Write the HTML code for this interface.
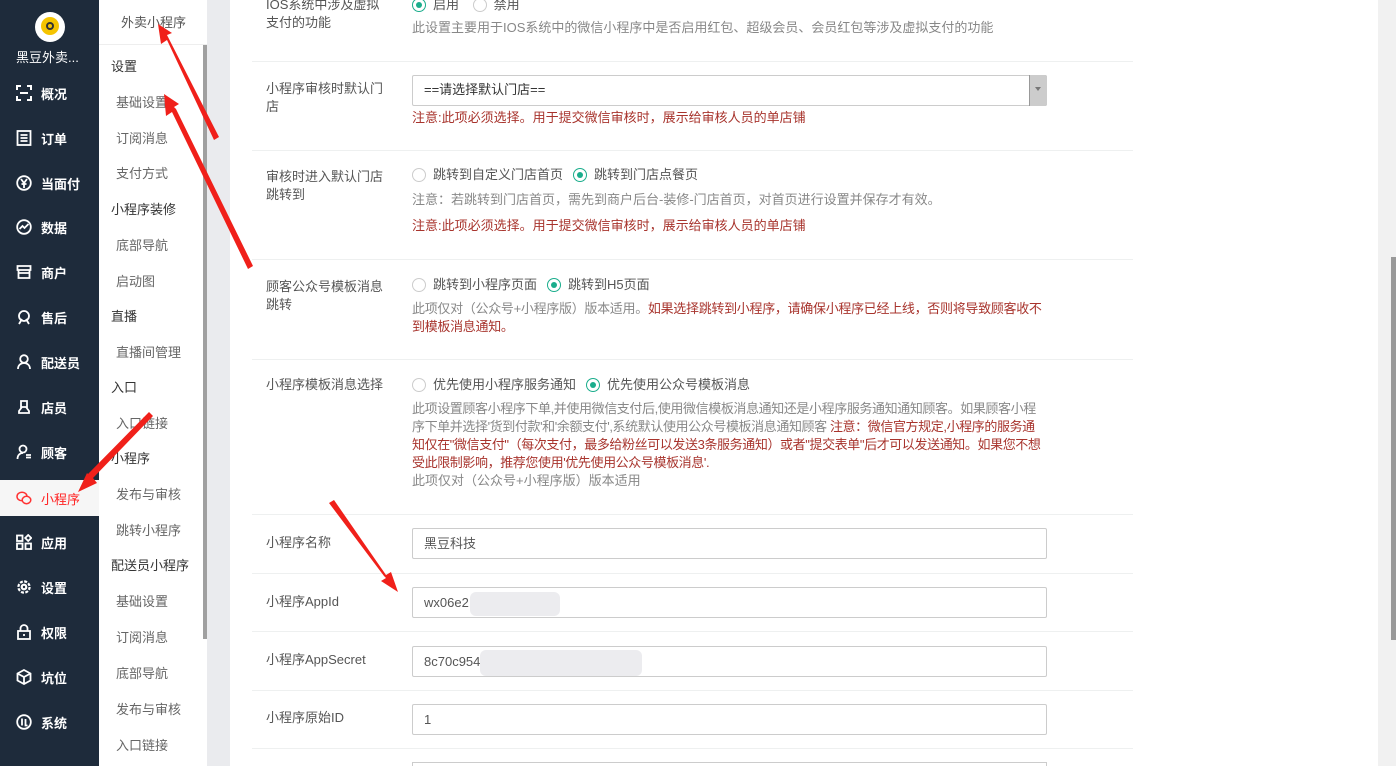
<!DOCTYPE html>
<html style="overflow:hidden;width:1396px;height:766px"><head><meta charset="utf-8"><style>
*{margin:0;padding:0;box-sizing:border-box}
body{width:1396px;height:766px;overflow:hidden;background:#eaebee;font-family:"Liberation Sans","Noto Sans CJK SC",sans-serif;font-size:13px;position:relative}
.a{position:absolute;white-space:nowrap}
#side{position:absolute;left:0;top:0;width:99px;height:766px;background:#1e2b3b;color:#fff}
.mi{position:absolute;left:0;width:99px;height:36px;font-size:13px;font-weight:bold}
.mi span{position:absolute;left:41px;top:9px}
.mi svg{position:absolute;left:16px;top:10px}
#sub{position:absolute;left:99px;top:0;width:108px;height:766px;background:#fff;overflow:hidden}
.si{position:absolute;font-size:13px;color:#666}
.sh{left:12px;color:#333}
.sc{left:17px}
#main{position:absolute;left:230px;top:0;width:1148px;height:766px;background:#fff;overflow:hidden}
.hr{position:absolute;left:22px;width:881px;height:1px;background:#eef0f0}
.lb{position:absolute;left:36px;color:#555;line-height:18px;width:120px;white-space:normal}
.tx{position:absolute;left:182px;color:#888;line-height:18px;white-space:nowrap}
.red{color:#a8342d}
.inp{position:absolute;left:182px;width:635px;height:31px;border:1px solid #ccc;border-radius:2px;color:#555;padding:8px 11px;line-height:14px}
.rd{display:inline-block;width:14px;height:14px;border:1px solid #ccc;border-radius:50%;vertical-align:-3px;margin-right:7px;position:relative;background:#fff}
.rd.on{border-color:#1aad8c}
.rd.on:after{content:"";position:absolute;left:3px;top:3px;width:6px;height:6px;border-radius:50%;background:#1aad8c}
.opt{color:#555;margin-right:10px}
</style></head><body>
<div id="side">
 <div class="a" style="left:35px;top:12px;width:30px;height:30px;border-radius:50%;background:#fff"></div>
 <div class="a" style="left:41px;top:17px;width:18px;height:18px;border-radius:50%;background:#f5c400"></div>
 <div class="a" style="left:46px;top:22px;width:8px;height:8px;border:2px solid #333;border-radius:50%"></div>
 <div class="a" style="left:16px;top:47px;font-size:13px;color:#fff">黑豆外卖...</div>
 <div class="mi" style="top:75px"><svg width="16" height="16" viewBox="0 0 16 16" fill="none" stroke="#fff" stroke-width="2"><path d="M1 5V1h4M11 1h4v4M15 11v4h-4M5 15H1v-4M4 8h8"/></svg><span>概况</span></div>
 <div class="mi" style="top:120px"><svg width="16" height="16" viewBox="0 0 16 16" fill="none" stroke="#fff" stroke-width="1.8"><rect x="1.5" y="1" width="13" height="14"/><path d="M4.5 5h7M4.5 8h7M4.5 11h7"/></svg><span>订单</span></div>
 <div class="mi" style="top:165px"><svg width="16" height="16" viewBox="0 0 16 16" fill="none" stroke="#fff" stroke-width="1.8"><circle cx="8" cy="8" r="6.8"/><path d="M5 4l3 4 3-4M8 8v5M5.5 9h5"/></svg><span>当面付</span></div>
 <div class="mi" style="top:209px"><svg width="16" height="16" viewBox="0 0 16 16" fill="none" stroke="#fff" stroke-width="1.8"><circle cx="8" cy="8" r="6.8"/><path d="M3.5 10l3-3 2 2 4-4"/></svg><span>数据</span></div>
 <div class="mi" style="top:254px"><svg width="16" height="16" viewBox="0 0 16 16" fill="none" stroke="#fff" stroke-width="1.8"><path d="M1.5 2h13v4h-13zM2.5 6v8h11V6M2 9h12"/></svg><span>商户</span></div>
 <div class="mi" style="top:299px"><svg width="16" height="16" viewBox="0 0 16 16" fill="none" stroke="#fff" stroke-width="1.8"><circle cx="8" cy="7" r="5"/><path d="M3 15l3-5M13 15l-3-5"/></svg><span>售后</span></div>
 <div class="mi" style="top:344px"><svg width="16" height="16" viewBox="0 0 16 16" fill="none" stroke="#fff" stroke-width="1.8"><circle cx="8" cy="5" r="3.8"/><path d="M2 15c0-4 3-6 6-6s6 2 6 6"/></svg><span>配送员</span></div>
 <div class="mi" style="top:389px"><svg width="16" height="16" viewBox="0 0 16 16" fill="none" stroke="#fff" stroke-width="1.8"><path d="M5 2h6v6H5zM6 8l-3 4v2h10v-2l-3-4"/></svg><span>店员</span></div>
 <div class="mi" style="top:434px"><svg width="16" height="16" viewBox="0 0 16 16" fill="none" stroke="#fff" stroke-width="1.8"><circle cx="7" cy="5" r="3.5"/><path d="M1.5 15c0-4 2.5-6 5.5-6M10 11h5M10 13.5h5"/></svg><span>顾客</span></div>
 <div class="mi" style="top:480px;background:#f6f6f6;color:#f22"><svg width="16" height="16" viewBox="0 0 16 16" fill="none" stroke="#f33" stroke-width="1.5"><ellipse cx="6" cy="6.5" rx="5" ry="4.3"/><ellipse cx="10.5" cy="10" rx="4.3" ry="3.7" fill="#f6f6f6"/></svg><span style="font-weight:normal">小程序</span></div>
 <div class="mi" style="top:524px"><svg width="16" height="16" viewBox="0 0 16 16" fill="none" stroke="#fff" stroke-width="1.8"><rect x="1" y="1.5" width="5.5" height="5.5"/><rect x="1" y="9.5" width="5.5" height="5.5"/><rect x="9.5" y="9.5" width="5.5" height="5.5"/><path d="M12.2 1l3 3-3 3-3-3z"/></svg><span>应用</span></div>
 <div class="mi" style="top:569px"><svg width="16" height="16" viewBox="0 0 16 16" fill="none" stroke="#fff" stroke-width="2.2"><circle cx="8" cy="8" r="2.3"/><circle cx="8" cy="8" r="5.6" stroke-dasharray="3 1.4"/></svg><span>设置</span></div>
 <div class="mi" style="top:614px"><svg width="16" height="16" viewBox="0 0 16 16" fill="none" stroke="#fff" stroke-width="1.8"><rect x="2" y="7" width="12" height="8"/><path d="M4.5 7V4.5a3.5 3.5 0 0 1 7 0V7M8 10v2"/></svg><span>权限</span></div>
 <div class="mi" style="top:659px"><svg width="16" height="16" viewBox="0 0 16 16" fill="none" stroke="#fff" stroke-width="1.8"><path d="M8 1l6.5 3.5v7L8 15l-6.5-3.5v-7zM1.5 4.5L8 8l6.5-3.5M8 8v7"/></svg><span>坑位</span></div>
 <div class="mi" style="top:704px"><svg width="16" height="16" viewBox="0 0 16 16" fill="none" stroke="#fff" stroke-width="1.8"><circle cx="8" cy="8" r="6.8"/><path d="M6 4.5v7M9.5 5v6.5h2"/></svg><span>系统</span></div>
</div>
<div id="sub">
 <div class="si" style="left:22px;top:12px;color:#555">外卖小程序</div>
 <div class="a" style="left:0;top:44px;width:108px;height:1px;background:#eee"></div>
 <div class="a" style="left:104px;top:45px;width:4px;height:594px;background:#a0a0a0"></div>
 <div class="si sh" style="top:56px">设置</div>
 <div class="si sc" style="top:92px">基础设置</div>
 <div class="si sc" style="top:128px">订阅消息</div>
 <div class="si sc" style="top:163px">支付方式</div>
 <div class="si sh" style="top:199px">小程序装修</div>
 <div class="si sc" style="top:235px">底部导航</div>
 <div class="si sc" style="top:271px">启动图</div>
 <div class="si sh" style="top:306px">直播</div>
 <div class="si sc" style="top:342px">直播间管理</div>
 <div class="si sh" style="top:377px">入口</div>
 <div class="si sc" style="top:413px">入口链接</div>
 <div class="si sh" style="top:448px">小程序</div>
 <div class="si sc" style="top:484px">发布与审核</div>
 <div class="si sc" style="top:520px">跳转小程序</div>
 <div class="si sh" style="top:555px">配送员小程序</div>
 <div class="si sc" style="top:591px">基础设置</div>
 <div class="si sc" style="top:627px">订阅消息</div>
 <div class="si sc" style="top:663px">底部导航</div>
 <div class="si sc" style="top:699px">发布与审核</div>
 <div class="si sc" style="top:735px">入口链接</div>
</div>
<div id="main">
 <div class="lb" style="top:-4px">IOS系统中涉及虚拟支付的功能</div>
 <div class="tx" style="top:-4px"><span class="rd on"></span><span class="opt">启用</span> <span class="rd"></span><span class="opt">禁用</span></div>
 <div class="tx" style="top:19px">此设置主要用于IOS系统中的微信小程序中是否启用红包、超级会员、会员红包等涉及虚拟支付的功能</div>
 <div class="hr" style="top:61px"></div>
 <div class="lb" style="top:80px">小程序审核时默认门店</div>
 <div class="inp" style="top:75px;width:635px;color:#333;padding-top:7px">==请选择默认门店==</div>
 <div class="a" style="left:799px;top:75px;width:18px;height:31px;background:#ccc;border-left:1px solid #999;border-radius:0 2px 2px 0"></div>
 <div class="a" style="left:805px;top:87px;border:3px solid transparent;border-top:4px solid #777"></div>
 <div class="tx red" style="top:109px">注意:此项必须选择。用于提交微信审核时，展示给审核人员的单店铺</div>
 <div class="hr" style="top:150px"></div>
 <div class="lb" style="top:168px">审核时进入默认门店跳转到</div>
 <div class="tx" style="top:166px"><span class="rd"></span><span class="opt">跳转到自定义门店首页</span><span class="rd on"></span><span class="opt">跳转到门店点餐页</span></div>
 <div class="tx" style="top:191px">注意：若跳转到门店首页，需先到商户后台-装修-门店首页，对首页进行设置并保存才有效。</div>
 <div class="tx red" style="top:217px">注意:此项必须选择。用于提交微信审核时，展示给审核人员的单店铺</div>
 <div class="hr" style="top:259px"></div>
 <div class="lb" style="top:278px">顾客公众号模板消息跳转</div>
 <div class="tx" style="top:276px"><span class="rd"></span><span class="opt">跳转到小程序页面</span><span class="rd on"></span><span class="opt">跳转到H5页面</span></div>
 <div class="tx" style="top:300px;letter-spacing:-0.3px">此项仅对（公众号+小程序版）版本适用。<span class="red">如果选择跳转到小程序，请确保小程序已经上线，否则将导致顾客收不<br>到模板消息通知。</span></div>
 <div class="hr" style="top:359px"></div>
 <div class="lb" style="top:376px;width:140px">小程序模板消息选择</div>
 <div class="tx" style="top:376px"><span class="rd"></span><span class="opt">优先使用小程序服务通知</span><span class="rd on"></span><span class="opt">优先使用公众号模板消息</span></div>
 <div class="tx" style="top:400px;letter-spacing:-0.4px">此项设置顾客小程序下单,并使用微信支付后,使用微信模板消息通知还是小程序服务通知通知顾客。如果顾客小程<br>序下单并选择'货到付款'和'余额支付',系统默认使用公众号模板消息通知顾客 <span class="red">注意：微信官方规定,小程序的服务通<br>知仅在"微信支付"（每次支付，最多给粉丝可以发送3条服务通知）或者"提交表单"后才可以发送通知。如果您不想<br>受此限制影响，推荐您使用'优先使用公众号模板消息'.</span></div>
 <div class="tx" style="top:472px">此项仅对（公众号+小程序版）版本适用</div>
 <div class="hr" style="top:514px"></div>
 <div class="lb" style="top:534px">小程序名称</div>
 <div class="inp" style="top:528px">黑豆科技</div>
 <div class="hr" style="top:573px"></div>
 <div class="lb" style="top:593px">小程序AppId</div>
 <div class="inp" style="top:587px">wx06e2</div>
 <div class="a" style="left:240px;top:592px;width:90px;height:24px;background:#ececef;border-radius:6px"></div>
 <div class="hr" style="top:631px"></div>
 <div class="lb" style="top:651px">小程序AppSecret</div>
 <div class="inp" style="top:646px">8c70c954</div>
 <div class="a" style="left:250px;top:650px;width:162px;height:26px;background:#ececef;border-radius:6px"></div>
 <div class="hr" style="top:690px"></div>
 <div class="lb" style="top:709px">小程序原始ID</div>
 <div class="inp" style="top:704px">1</div>
 <div class="hr" style="top:748px"></div>
 <div class="a" style="left:182px;top:762px;width:635px;height:4px;border:1px solid #ccc;border-bottom:none"></div>
</div>
<div class="a" style="left:1378px;top:0;width:18px;height:766px;background:#f1f1f1"></div>
<div class="a" style="left:1391px;top:257px;width:5px;height:383px;background:#999"></div>
<svg class="a" style="left:0;top:0" width="420" height="766">
 <g fill="#f0201a">
 <polygon points="219,137 214,140 167,40 161,44 158,24 172,33 167,35 168,37"/>
 <polygon points="253,266 248,269 172,112 166,116 164,94 179,104 174,107 176,109"/>
 <polygon points="149,412 153,416 93,478 97,483 78,492 87,473 90,476 88,474"/>
 <polygon points="329,503 334,500 386,575 391,572 398,592 381,581 386,578 384,576"/>
 </g>
</svg>
</body></html>
